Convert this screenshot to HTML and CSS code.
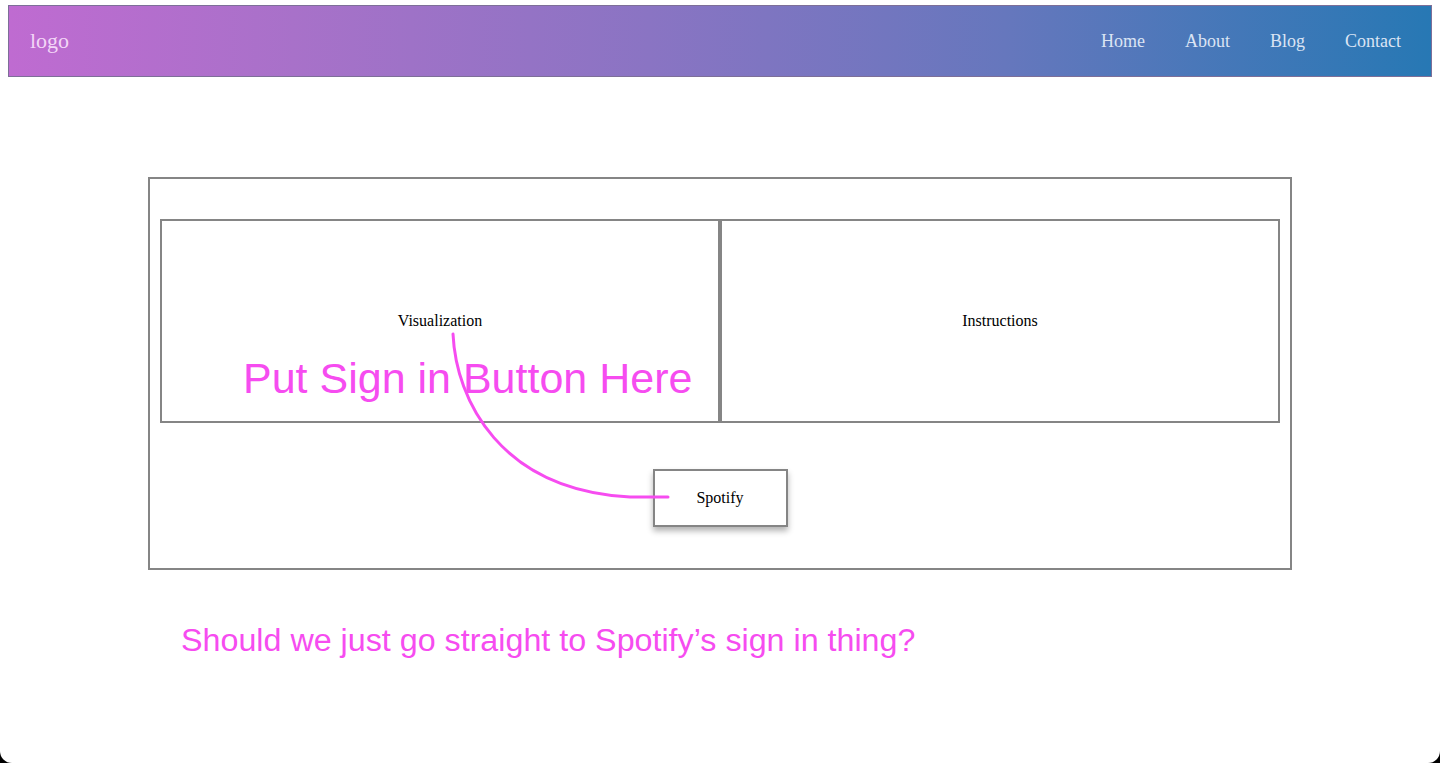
FILE: index.html
```html
<!DOCTYPE html>
<html lang="en">
<head>
<meta charset="utf-8">
<title>Spotify Visualizer</title>
<link rel="stylesheet" href="styles.css">
</head>
<body>
<div class="page">
  <header class="topbar">
    <div class="logo">logo</div>
    <nav class="nav">
      <a href="#">Home</a>
      <a href="#">About</a>
      <a href="#">Blog</a>
      <a href="#">Contact</a>
    </nav>
  </header>
  <main class="main">
    <section class="frame">
      <div class="panels">
        <div class="panel">Visualization</div>
        <div class="panel">Instructions</div>
      </div>
      <div class="actions">
        <button class="spotify">Spotify</button>
      </div>
    </section>
  </main>
  <div class="notes">
    <svg class="arrow" width="1440" height="763" viewBox="0 0 1440 763">
      <path d="M453 334 C 456 400, 500 490, 630 497 L 668 497" fill="none" stroke="#f64cf0" stroke-width="3" stroke-linecap="round"/>
    </svg>
    <div class="note note-button">Put Sign in Button Here</div>
    <div class="note note-question">Should we just go straight to Spotify’s sign in thing?</div>
  </div>
</div>
</body>
</html>
```
FILE: styles.css
```css
html {
  background: #000;
  margin: 0;
  height: 100%;
}
body {
  margin: 0;
  height: 763px;
  background: #fff;
  border-radius: 0 0 12px 12px;
  overflow: hidden;
  font-family: "Liberation Serif", "Times New Roman", serif;
}
.page {
  position: relative;
  height: 100%;
  padding: 5px 8px 0;
  box-sizing: border-box;
}
.topbar {
  height: 72px;
  box-sizing: border-box;
  border: 1px solid #7d6f98;
  background: linear-gradient(90deg, #bf6bd1 0%, #a871c9 20%, #8a74c3 45%, #6677bd 70%, #2778b4 100%);
  display: flex;
  align-items: center;
  justify-content: space-between;
  padding: 0 30px 0 21px;
}
.logo {
  font-size: 22px;
  color: #f3d6f7;
}
.nav {
  display: flex;
  gap: 40px;
}
.nav a {
  color: #dbe4f4;
  text-decoration: none;
  font-size: 18px;
}
.main {
  padding-top: 100px;
  display: flex;
  justify-content: center;
}
.frame {
  width: 1144px;
  box-sizing: border-box;
  border: 2px solid #858585;
  padding: 40px 10px 41px;
}
.panels {
  display: flex;
}
.panel {
  flex: 1;
  height: 204px;
  box-sizing: border-box;
  border: 2px solid #858585;
  display: flex;
  align-items: center;
  justify-content: center;
  font-size: 16px;
  color: #000;
}
.actions {
  display: flex;
  justify-content: center;
  padding-top: 46px;
}
.spotify {
  width: 135px;
  height: 58px;
  box-sizing: border-box;
  border: 2px solid #858585;
  background: #fff;
  font-family: "Liberation Serif", "Times New Roman", serif;
  font-size: 16px;
  color: #000;
  box-shadow: 0 4px 6px rgba(0, 0, 0, 0.3);
  padding: 0;
}
.notes {
  position: absolute;
  inset: 0;
  pointer-events: none;
}
.arrow {
  position: absolute;
  left: 0;
  top: 0;
}
.note {
  position: absolute;
  font-family: "Liberation Sans", Arial, sans-serif;
  color: #f64cf0;
  white-space: nowrap;
  line-height: 1;
}
.note-button {
  left: 243px;
  top: 357px;
  font-size: 43px;
}
.note-question {
  left: 181px;
  top: 624px;
  font-size: 32.25px;
}
```
